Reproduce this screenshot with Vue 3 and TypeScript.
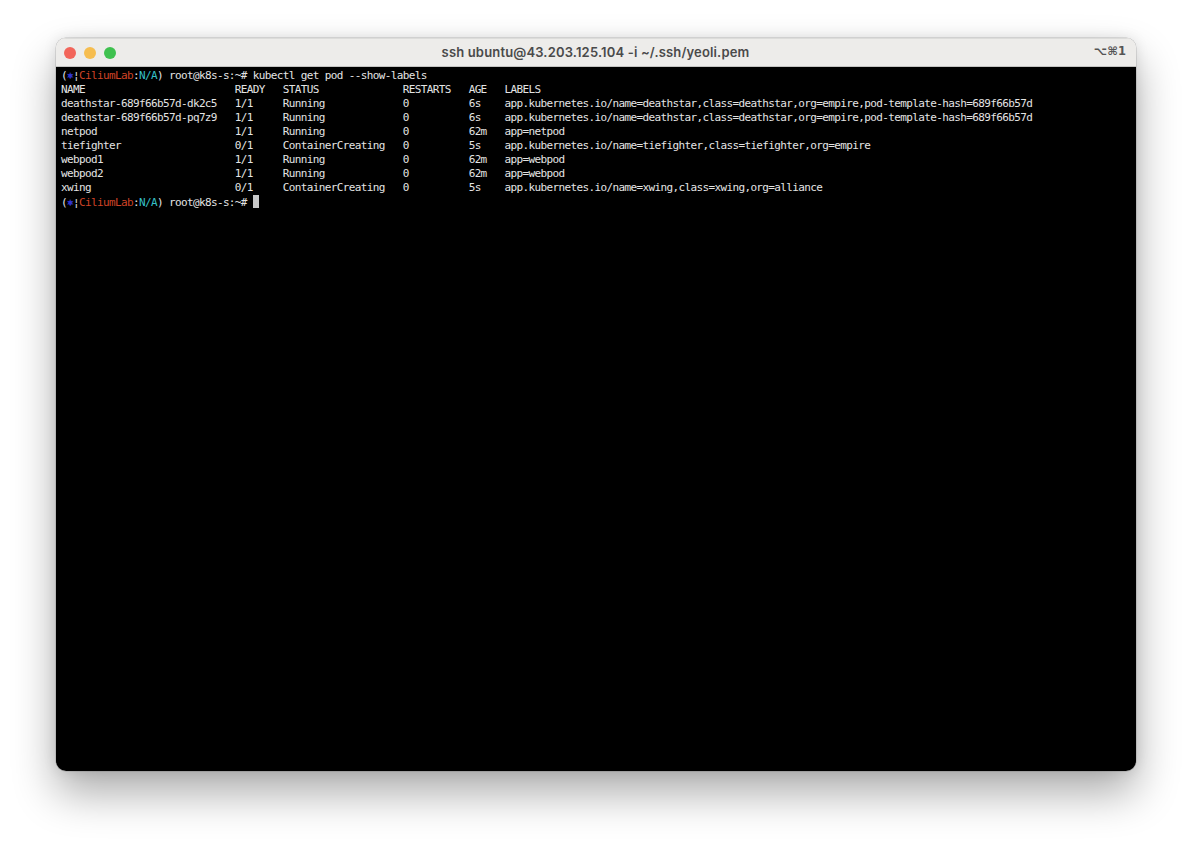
<script setup lang="ts">
interface Row { name: string; ready: string; status: string; restarts: string; age: string; labels: string }
const rows: Row[] = [
  { name: 'NAME', ready: 'READY', status: 'STATUS', restarts: 'RESTARTS', age: 'AGE', labels: 'LABELS' },
  { name: 'deathstar-689f66b57d-dk2c5', ready: '1/1', status: 'Running', restarts: '0', age: '6s', labels: 'app.kubernetes.io/name=deathstar,class=deathstar,org=empire,pod-template-hash=689f66b57d' },
  { name: 'deathstar-689f66b57d-pq7z9', ready: '1/1', status: 'Running', restarts: '0', age: '6s', labels: 'app.kubernetes.io/name=deathstar,class=deathstar,org=empire,pod-template-hash=689f66b57d' },
  { name: 'netpod', ready: '1/1', status: 'Running', restarts: '0', age: '62m', labels: 'app=netpod' },
  { name: 'tiefighter', ready: '0/1', status: 'ContainerCreating', restarts: '0', age: '5s', labels: 'app.kubernetes.io/name=tiefighter,class=tiefighter,org=empire' },
  { name: 'webpod1', ready: '1/1', status: 'Running', restarts: '0', age: '62m', labels: 'app=webpod' },
  { name: 'webpod2', ready: '1/1', status: 'Running', restarts: '0', age: '62m', labels: 'app=webpod' },
  { name: 'xwing', ready: '0/1', status: 'ContainerCreating', restarts: '0', age: '5s', labels: 'app.kubernetes.io/name=xwing,class=xwing,org=alliance' },
]
const line = (r: Row): string =>
  r.name.padEnd(29) + r.ready.padEnd(8) + r.status.padEnd(20) + r.restarts.padEnd(11) + r.age.padEnd(6) + r.labels
</script>

<template>
  <div class="stage">
    <section class="window">
      <header class="titlebar">
        <div class="lights">
          <span class="light red"></span>
          <span class="light yellow"></span>
          <span class="light green"></span>
        </div>
        <div class="title">ssh ubuntu@43.203.125.104 -i ~/.ssh/yeoli.pem</div>
        <div class="shortcut">⌥⌘1</div>
      </header>
      <main class="term">
        <div class="ln">(<span class="helm">⎈</span><span class="pipe">¦</span><span class="ctx">CiliumLab</span>:<span class="ns">N/A</span>) root@k8s-s:~# kubectl get pod --show-labels</div>
        <div v-for="r in rows" :key="r.name" class="ln">{{ line(r) }}</div>
        <div class="ln">(<span class="helm">⎈</span><span class="pipe">¦</span><span class="ctx">CiliumLab</span>:<span class="ns">N/A</span>) root@k8s-s:~# <span class="cursor"></span></div>
      </main>
    </section>
  </div>
</template>

<style>
html, body { margin: 0; background: #fff; }
</style>

<style scoped>
.stage {
  box-sizing: border-box;
  width: 1192px;
  height: 845px;
  padding: 38px 56px 74px;
  overflow: hidden;
  background: #fff;
}
.window {
  display: flex;
  flex-direction: column;
  height: 100%;
  border-radius: 10px;
  overflow: hidden;
  box-shadow: 0 22px 44px rgba(0, 0, 0, 0.33), 0 0 0 0.5px rgba(0, 0, 0, 0.2), 0 0 14px rgba(0, 0, 0, 0.1);
}
.titlebar {
  box-sizing: border-box;
  flex: none;
  height: 29px;
  display: flex;
  align-items: center;
  padding: 0 9px 0 8px;
  background: #edecea;
  border-top: 1px solid #dcdcda;
  border-bottom: 1px solid #c4c4c2;
}
.lights {
  display: flex;
  gap: 8px;
  width: 240px;
}
.light {
  width: 12px;
  height: 12px;
  border-radius: 50%;
}
.red { background: #f2655a; }
.yellow { background: #f6bd4f; }
.green { background: #3fc14f; }
.title {
  flex: 1;
  text-align: center;
  padding-right: 240px;
  font: 600 13px/1 Inter, "Liberation Sans", sans-serif;
  letter-spacing: 0.16px;
  color: #4a4a4a;
}
.shortcut {
  position: absolute;
  right: 66px;
  top: 46px;
  font: 700 11.5px/1 "DejaVu Sans", sans-serif;
  color: #555;
}
.term {
  flex: 1;
  background: #000;
  padding: 2px 5px 0;
  color: #e4e4e4;
  font-family: "DejaVu Sans Mono", monospace;
  font-size: 11px;
  letter-spacing: -0.628px;
}
.ln {
  height: 14px;
  line-height: 14px;
  white-space: pre;
}
.helm {
  display: inline-block;
  width: 6px;
  text-align: center;
  color: #3236d8;
  font-weight: 700;
}
.pipe { color: #e4e4e4; }
.ctx { color: #cf4326; }
.ns { color: #35c0c8; }
.cursor {
  display: inline-block;
  width: 6px;
  height: 13px;
  background: #c8c8c8;
  vertical-align: -2px;
}
</style>
